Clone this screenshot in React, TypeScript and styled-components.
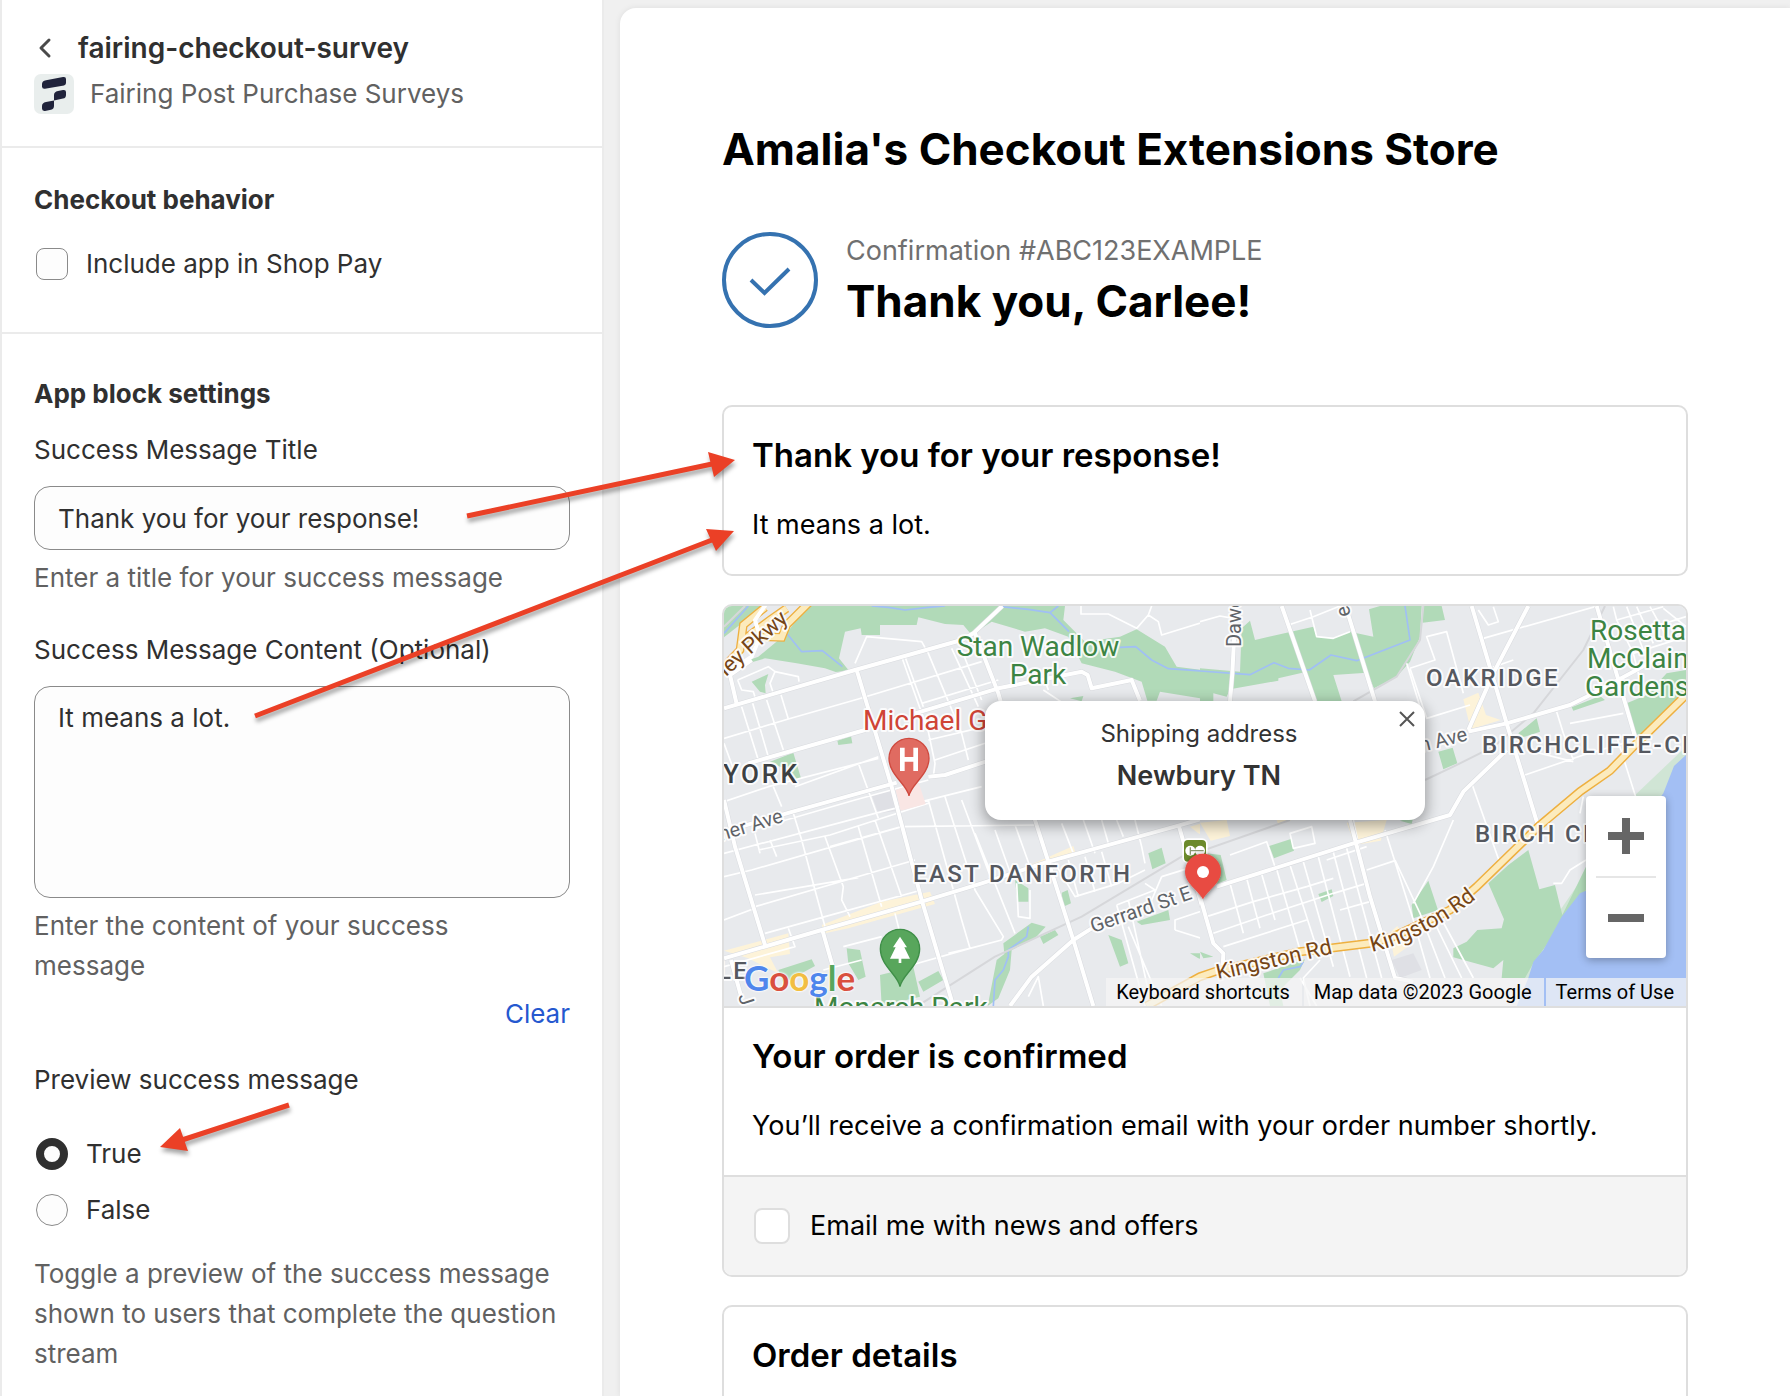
import React, { useState } from "react";
import styled, { createGlobalStyle } from "styled-components";

const GlobalStyle = createGlobalStyle`
  *, *::before, *::after { box-sizing: border-box; }
  body {
    margin: 0;
    background: #f0f0f0;
    font-family: Inter, "Liberation Sans", sans-serif;
    -webkit-font-smoothing: antialiased;
  }
  h1, h2, h3, p, fieldset, legend { margin: 0; padding: 0; border: 0; font-weight: inherit; }
  button, input, textarea { font: inherit; color: inherit; }
`;

const Layout = styled.div`
  position: relative;
  display: flex;
  gap: 16px;
  height: 100vh;
  overflow: hidden;
`;

/* ---------- settings sidebar ---------- */

const Sidebar = styled.aside`
  flex: 0 0 604px;
  background: #fff;
  border: solid #ebebeb;
  border-width: 0 2px;
  color: #303030;
  font-size: 26px;
  line-height: 40px;
`;

const Section = styled.section<{ $pad: string }>`
  padding: ${(p) => p.$pad};
  & + & { border-top: 2px solid #ebebeb; }
`;

const TitleRow = styled.div`
  display: flex;
  align-items: center;
  gap: 22px;
`;

const BackButton = styled.button`
  display: flex;
  padding: 0;
  border: 0;
  background: none;
`;

const BlockTitle = styled.h1`
  font-size: 28px;
  font-weight: 600;
`;

const AppRow = styled.div`
  display: flex;
  align-items: center;
  gap: 16px;
  margin-top: 6px;
  color: #616161;
`;

const GroupTitle = styled.h2<{ $gap: number }>`
  font-size: 26px;
  font-weight: 650;
  margin-bottom: ${(p) => p.$gap}px;
`;

const Choice = styled.label`
  display: flex;
  align-items: center;
  gap: 18px;
  padding-left: 2px;
`;

const Tick = styled.input`
  appearance: none;
  width: 32px;
  height: 32px;
  margin: 0;
  border: 1px solid #8a8a8a;
  border-radius: 8px;
  background: #fdfdfd;
  &:checked { border: 8px solid #303030; }
`;

const RadioDot = styled(Tick)`
  border-radius: 50%;
`;

const Field = styled.div<{ $after: number }>`
  display: flex;
  flex-direction: column;
  margin-bottom: ${(p) => p.$after}px;
`;

const FieldLabel = styled.label`
  margin-bottom: 16px;
`;

const TextInput = styled.input`
  height: 64px;
  padding: 0 23px;
  border: 1px solid #8a8a8a;
  border-radius: 16px;
  background: #fdfdfd;
`;

const TextArea = styled.textarea`
  height: 212px;
  padding: 11px 23px;
  border: 1px solid #8a8a8a;
  border-radius: 16px;
  background: #fdfdfd;
  resize: none;
`;

const Help = styled.p<{ $gap?: number }>`
  margin-top: ${(p) => p.$gap ?? 8}px;
  padding-right: 8px;
  color: #616161;
`;

const ClearButton = styled.button`
  align-self: flex-end;
  margin-top: 8px;
  padding: 0;
  border: 0;
  background: none;
  color: #2558cf;
`;

const RadioGroup = styled.fieldset`
  display: flex;
  flex-direction: column;
  gap: 16px;
`;

const RadioLegend = styled.legend`
  margin-bottom: 34px;
`;

/* ---------- checkout preview ---------- */

const Preview = styled.main`
  flex: 1;
  min-width: 0;
  margin-top: 8px;
  padding: 112px 102px 0;
  background: #fff;
  border-radius: 16px 0 0 0;
  box-shadow: 0 0 6px rgba(0, 0, 0, 0.08);
  color: #000;
  font-size: 27px;
  line-height: 42px;
`;

const StoreName = styled.h1`
  font-size: 44px;
  line-height: 58px;
  font-weight: 650;
`;

const Confirmation = styled.header`
  display: flex;
  align-items: center;
  gap: 28px;
  margin: 52px 0 75px;
`;

const ConfirmationNumber = styled.p`
  color: #707070;
`;

const Thanks = styled.h2`
  font-size: 44px;
  line-height: 58px;
  font-weight: 650;
`;

const Card = styled.section`
  margin-bottom: 28px;
  border: 2px solid #dedede;
  border-radius: 10px;
  overflow: hidden;
`;

const CardBody = styled.div`
  padding: 28px;
`;

const CardTitle = styled.h3`
  font-size: 33px;
  line-height: 40px;
  font-weight: 600;
  margin-bottom: 29px;
`;

const CardFooter = styled.label`
  display: flex;
  align-items: center;
  gap: 20px;
  padding: 28px 30px;
  border-top: 2px solid #dedede;
  background: #f4f4f4;
`;

const OfferTick = styled.input`
  appearance: none;
  width: 36px;
  height: 36px;
  margin: 0;
  border: 2px solid #dedede;
  border-radius: 8px;
  background: #fff;
`;

/* ---------- map ---------- */

const MapFrame = styled.div`
  position: relative;
  height: 402px;
  border-bottom: 2px solid #dedede;
  background: #e8eaed;
  overflow: hidden;
`;

const MapArt = styled.svg`
  display: block;
  width: 100%;
  height: 400px;
  font-family: Roboto, "Liberation Sans", sans-serif;
  font-size: 22px;

  text { paint-order: stroke; stroke: #fff; stroke-width: 4px; stroke-linejoin: round; stroke-opacity: 0.85; }
  .park { fill: #3c8443; font-size: 28px; }
  .care { fill: #cf4436; font-size: 28px; }
  .area { fill: #55585f; font-size: 24px; font-weight: 500; letter-spacing: 0.1em; }
  .city { fill: #3c4043; font-size: 26px; font-weight: 500; letter-spacing: 0.1em; }
  .road { fill: #5f6368; font-size: 20px; }
  .highway { fill: #754516; }
`;

const Popup = styled.div`
  position: absolute;
  top: 95px;
  left: 50%;
  width: 440px;
  margin-left: -220px;
  padding: 12px 12px 23px 0;
  border-radius: 16px;
  background: #fff;
  box-shadow: 0 4px 14px 2px rgba(0, 0, 0, 0.32);
  color: #333;
  text-align: center;
`;

const PopupLabel = styled.p`
  font-size: 24px;
`;

const PopupPlace = styled.p`
  font-size: 27px;
  font-weight: 600;
`;

const PopupClose = styled.button`
  position: absolute;
  top: 10px;
  right: 10px;
  display: flex;
  padding: 0;
  border: 0;
  background: none;
`;

const ZoomControl = styled.div`
  position: absolute;
  right: 20px;
  bottom: 48px;
  display: flex;
  flex-direction: column;
  align-items: center;
  width: 80px;
  border-radius: 4px;
  background: #fff;
  box-shadow: 0 2px 8px rgba(0, 0, 0, 0.3);
`;

const ZoomButton = styled.button`
  display: flex;
  align-items: center;
  justify-content: center;
  width: 60px;
  height: 80px;
  padding: 0;
  border: 0;
  background: none;
  & + & { height: 82px; border-top: 2px solid #e6e6e6; }
`;

const GoogleLink = styled.a`
  position: absolute;
  left: 20px;
  bottom: 5px;
  font-family: Lato, "Open Sans", sans-serif;
  font-size: 35px;
  line-height: 48px;
  font-weight: 700;
  text-decoration: none;
  text-shadow: 0 0 2px #fff, 0 0 2px #fff, 0 0 3px #fff;
`;

const Tint = styled.span<{ $c: string }>`
  color: ${(p) => p.$c};
`;

const MapCredits = styled.div`
  position: absolute;
  right: 0;
  bottom: 0;
  display: flex;
  gap: 2px;
  font-family: Roboto, "Liberation Sans", sans-serif;
  font-size: 20px;
  line-height: 28px;
`;

const CreditButton = styled.button`
  padding: 0 12px 0 10px;
  border: 0;
  background: rgba(245, 245, 245, 0.72);
  color: #000;
  line-height: 28px;
`;

const CreditText = styled.span`
  padding: 0 12px 0 10px;
  background: rgba(245, 245, 245, 0.72);
`;

const CreditLink = styled.a`
  padding: 0 12px 0 10px;
  background: rgba(245, 245, 245, 0.72);
  color: #000;
  text-decoration: none;
`;

const Annotations = styled.svg`
  position: absolute;
  top: 0;
  left: 0;
  pointer-events: none;
  filter: drop-shadow(1px 4px 2px rgba(0, 0, 0, 0.35));
`;

/* Streets are traced on two tiles, each drawn at three units per pixel. */
const WEST = "translate(-9 -6) scale(0.33333)";
const EAST = "translate(476 -6) scale(0.33333)";

const westParks = [
  "M27 18H150L70 78L27 112Z",
  "M60 195L130 170L215 100L275 18H1050L1045 60L1110 125L1215 110L1265 88L1350 140L1385 200L1500 215V302L1335 275L1325 302H1297L1280 245L1200 215L1100 190L1060 110L990 85L930 95L830 65L770 105L745 75L690 72L610 52L605 75L495 75V105H440L437 85L390 95L372 175L402 212L362 216L330 205L245 190L150 175L100 190L40 230Z",
  "M110 245L160 222L150 255L152 280L135 275Z",
  "M367 422L408 408L412 430L370 435Z",
  "M165 485L235 458L258 535L240 540L225 505L195 500Z",
  "M1300 760L1340 743L1352 790L1312 808Z",
  "M900 840L940 865V905H908Z",
  "M1040 878L1058 870L1068 910L1045 920Z",
  "M395 1045L435 1050L452 1130L430 1140L400 1090Z",
  "M495 1125L595 1100L615 1190L500 1218Z",
  "M610 1145L670 1113L685 1140L625 1175Z",
  "M865 1030L950 968L992 980L960 1015L890 1050L885 1110L850 1195L818 1218L845 1080L868 1062Z",
  "M975 1010L1020 990L1030 1005L985 1032Z",
  "M1265 965L1360 930L1365 960L1280 975Z",
  "M1180 1005L1220 1020L1240 1090L1215 1100Z",
  "M1425 1060H1500V1085L1450 1075Z",
  "M190 1110L290 1078L300 1098L205 1150Z",
  "M1065 295L1105 288L1100 304Z",
];
const westShops = [
  "M320 975L500 905L645 875L660 912L400 985L330 1000Z",
  "M27 1052L220 1000L225 1062L165 1072L190 1120L150 1100L100 1075Z",
  "M900 815L1075 738L1082 760L960 800Z",
  "M1425 680L1500 658V722L1450 700Z",
];
const westMinor = [
  "M27 415L220 357L430 297L800 185", "M240 560L490 470", "M27 605L160 560L490 475",
  "M110 690L420 600L640 540", "M27 760L480 640L800 560", "M130 750L345 705L640 610", "M27 830L110 810L560 680L960 675",
  "M120 885L430 833", "M120 920L600 780", "M150 1000L330 950L620 870", "M345 740L560 680", "M560 170L640 395L660 490L655 530",
  "M640 160L740 400L760 480", "M710 145L790 320", "M570 170L625 320", "M740 150L800 300",
  "M80 320L130 480", "M113 310L160 470", "M155 300L205 450", "M198 285L220 357", "M27 430L60 520",
  "M430 490L490 655", "M175 560L200 620", "M235 640L260 720L300 870L330 980", "M330 710L385 860L380 900L405 950",
  "M430 680L500 920", "M480 660L560 890", "M640 600L740 960L765 1045", "M690 590L780 870L865 1010L860 1020L765 1045L590 1095",
  "M740 600L830 840", "M780 700L900 1000", "M840 690L890 830", "M900 675L945 800", "M1040 670L1075 760", "M1105 660L1140 760",
  "M1160 660L1180 730", "M1205 660L1225 710", "M1260 660L1280 740L1290 790", "M1020 790L1080 890L1210 850L1290 810",
  "M1060 780L1090 890", "M1110 770L1140 875", "M1160 755L1190 860", "M1340 830L1310 900", "M1340 830L1420 805",
  "M660 480L810 430", "M640 420L810 380", "M620 310L850 240", "M1098 18V42H1180L1265 85L1300 45L1310 18", "M1300 45L1330 65L1340 105L1500 55",
  "M420 190L455 110L620 125L640 160", "M68 240L160 200L180 215L250 230L252 245M180 215L165 250L175 280", "M68 240L80 270L115 275L120 290",
  "M540 940L555 1000L560 1050", "M385 1040L500 1010", "M220 985L240 1040L27 1100", "M325 1110L440 1080", "M700 1060L765 1045",
  "M905 850L910 950L945 955V870", "M1205 915L1290 1218", "M1240 900L1310 1218", "M1205 915L1320 870L1290 850", "M1380 990L1490 1025",
  "M1380 990V960L1500 920", "M940 1190L970 1130L985 1218", "M1240 980L1340 1218", "M985 270L1060 320", "M985 230L1000 270",
  "M120 700L135 760", "M165 720L185 770", "M27 960L120 925",
];
const westMajor = [
  "M27 325L420 210L740 120L775 100L862 18", "M100 490L450 390", "M27 695L215 640L545 548", "M27 1075L320 990L620 905L800 850L1000 785L1390 677L1500 645",
  "M425 210L530 560L620 900L715 1218", "M780 100L850 280L960 660L1000 785L1075 1020L1135 1218",
  "M600 340L850 265L1100 215L1118 225L1130 265L1250 240L1275 302", "M640 530L690 525L812 485", "M27 600L60 740L150 1035",
  "M65 312L45 225L110 180", "M885 1218L950 1130L1075 1020L1130 985", "M1390 672L1470 950L1500 1040", "M322 990L352 1095", "M48 1080L80 1195",
];
const westWater = [
  "M27 100L100 18", "M195 60L215 100L260 155L322 152L382 200", "M470 18L520 22L570 30L640 22L690 18", "M860 20L940 28L1005 38L1030 18",
  "M1005 38L1062 95", "M1215 142L1262 140L1310 180L1360 206L1500 216", "M940 980L935 1010L880 1050V1070L865 1110L840 1140L835 1218",
];
const parkway = "M27 200L75 150L85 75L150 22M110 130L135 110L200 112L215 75L290 0M85 120L165 60L215 25";

const eastParks = [
  "M0 205L60 210L120 215L125 85L150 62L165 120L340 80L350 110L400 115L450 95L520 110L507 28L540 18H665L660 110L630 185L590 230L522 265L500 218L400 225L425 304H340L320 215L235 235V242L90 268L80 290L40 280V304H0Z",
  "M670 18H725L735 60L668 68Z",
  "M1280 310L1340 285L1400 220L1458 210V280L1330 425L1300 390Z",
  "M1115 322L1200 288L1215 300L1120 332Z",
  "M955 400L1010 355L1020 395L968 412Z",
  "M715 455L758 443L772 490L730 508Z",
  "M208 738L275 716L282 752L222 775Z",
  "M355 882L395 868L400 888L365 906Z",
  "M635 915L685 842L714 930L640 955Z",
  "M600 662L640 652L635 672Z",
  "M925 795L985 750L1018 868L1065 855L1087 945L1158 800V870L1000 1090L975 1134H905L910 1080L880 1105L760 1072V1045L800 1025L832 990L905 985L912 958L865 850Z",
  "M190 1120L315 1078L300 1110L240 1170L250 1218H210Z",
  "M20 760L62 765L80 840L50 852Z",
  "M0 1055L40 1070L10 1075Z",
];
const eastShops = [
  "M790 298L835 278L858 345L902 360L812 388Z",
  "M568 1000L592 978L630 1035L582 1070Z",
  "M440 668L560 660L542 722L465 735Z",
  "M0 668L80 660L90 708L32 722Z",
  "M230 660L275 660L235 675Z",
];
const eastMinor = [
  "M90 850L130 1000", "M140 835L180 985", "M185 822L225 960", "M230 808L300 1050", "M270 795L355 1060", "M310 785L400 1100", "M355 770L450 1130",
  "M400 757L500 1134", "M440 745L545 1134", "M20 950L160 905L320 860L400 835", "M40 1000L200 945L400 880L500 850", "M70 1040L320 960",
  "M420 930L510 905", "M500 810L585 782", "M555 690L640 960L690 1134", "M585 780L660 940L735 1134", "M90 765L200 725L225 800", "M270 700L335 680L345 730L280 745Z",
  "M640 910L700 800L760 660", "M817 555L900 790", "M690 940L785 1134", "M710 930L820 1134", "M630 205L705 180L680 110L740 95L790 280",
  "M630 205L680 355L810 315", "M850 115L1185 20", "M870 205L940 180", "M835 30L865 75L895 65L880 20", "M975 525L1150 465L1270 430", "M980 450L1120 485",
  "M1110 370L1270 340", "M1070 335L1090 400L1120 480", "M1250 410L1310 600", "M1150 590L1140 640", "M1060 850L1085 850L1110 810L1158 780",
  "M265 75L340 50L420 18", "M330 30L350 110L400 115L450 95", "M0 65L60 48L100 55", "M1240 20L1250 60L1300 160L1458 110", "M1280 20L1330 150", "M1310 20L1360 130",
  "M1350 20L1400 110", "M1250 60L1390 20", "M1270 110L1458 50", "M1390 25L1458 80", "M1300 160L1320 240", "M360 1080L310 1134L330 1218", "M350 1218L300 1134",
  "M620 190L660 320", "M460 660L500 850", "M380 780L500 740",
];
const eastMajor = [
  "M103 100L97 220L90 304", "M245 18L345 304", "M445 45L525 304", "M450 660L510 890L585 1134L640 1145", "M815 18L920 370L1015 680",
  "M985 18L880 220L805 390", "M1190 18L1305 410", "M805 395L920 370L1110 315L1160 290L1300 215L1380 170", "M50 860L460 730L750 645L790 575L920 450",
  "M0 890L40 1030L70 1060L68 1100",
];
const eastWater = ["M0 213L150 224L222 188L265 205L328 210L393 165L470 182L630 120L615 18", "M310 1085L300 1100L250 1110L235 1134"];
const eastRail = ["M1215 18L1150 150L1000 340L880 440L760 500L675 540", "M0 755L270 660", "M670 18L660 120L590 230L460 304"];
const kingston = "M-160 1218L0 1130L50 1113L300 1055L395 1044L510 1030L580 1010L750 930L830 860L1015 680L1140 575L1230 512L1300 440L1458 285";

function Strokes({ d, color, width }: { d: string[]; color: string; width: number }) {
  return <path d={d.join("")} fill="none" stroke={color} strokeWidth={width} strokeLinejoin="round" />;
}

function Tile({ at, parks, shops, minor, major, water, rail }: Record<"parks" | "shops" | "minor" | "major" | "water" | "rail", string[]> & { at: string }) {
  return (
    <g transform={at}>
      <path d={parks.join("")} fill="#b1dab8" />
      <path d={shops.join("")} fill="#fdf3d9" />
      <Strokes d={water} color="#a0bff5" width={5} />
      <Strokes d={rail} color="#d6d7da" width={6} />
      <Strokes d={minor} color="#ffffff" width={5} />
      <Strokes d={major} color="#d9dbdf" width={15} />
      <Strokes d={major} color="#ffffff" width={12} />
    </g>
  );
}

function StreetMap() {
  return (
    <MapArt viewBox="0 0 962 400" preserveAspectRatio="xMidYMid slice" role="img" aria-label="Map of the shipping address">
      <defs>
        <clipPath id="west"><rect x="0" y="0" width="476" height="400" /></clipPath>
        <clipPath id="east"><rect x="476" y="0" width="486" height="400" /></clipPath>
        <path id="kingston-curve" d="M648 346Q 702 334 758 288" />
        <filter id="pin-shadow" x="-50%" y="-50%" width="200%" height="200%">
          <feDropShadow dx="1" dy="3" stdDeviation="8" floodOpacity="0.6" />
        </filter>
      </defs>
      <rect width="962" height="400" fill="#e8eaed" />
      <g clipPath="url(#west)">
        <g transform={WEST}>
          <path d="M470 585L530 570L550 632L490 640Z" fill="#dfe0e5" />
        </g>
        <Tile at={WEST} parks={westParks} shops={westShops} minor={westMinor} major={westMajor} water={westWater}
          rail={["M620 1210L840 1070L1100 950L1400 770L1500 730", "M27 80L90 18"]} />
        <path transform={WEST} d="M542 570L610 545L632 612L557 632Z" fill="#f9e6e4" />
        <g transform={WEST} fill="none">
          <path d={parkway} stroke="#eeb040" strokeWidth="26" />
          <path d={parkway} stroke="#fcebbd" strokeWidth="18" />
          <path d="M65 200L110 170L135 110L120 60L155 10" stroke="#fff" strokeWidth="12" />
        </g>
      </g>
      <g clipPath="url(#east)">
        <g transform={EAST}>
          <path d="M1458 440L1300 590L1150 830L1060 960L960 1134H1100L1458 600Z" fill="#d0e5d5" />
          <path d="M575 1080L640 1060L665 1110L600 1134Z" fill="#dfe0e5" />
        </g>
        <Tile at={EAST} parks={eastParks} shops={eastShops} minor={eastMinor} major={eastMajor} water={eastWater} rail={eastRail} />
        <path transform={EAST} d="M1458 465L1422 498L1390 580L1300 700L1158 872L1140 880L1085 950L1030 1050L1000 1085L985 1134L950 1218H1458Z" fill="#a3bff4" />
      </g>
      <g transform={EAST} fill="none">
        <path d={kingston} stroke="#eeb040" strokeWidth="27" />
        <path d={kingston} stroke="#fcebbd" strokeWidth="18" />
      </g>

      <text className="highway" transform="translate(2 71) rotate(-42)">ley Pkwy</text>
      <text className="park" x="314" y="50" textAnchor="middle">Stan Wadlow</text>
      <text className="park" x="314" y="78" textAnchor="middle">Park</text>
      <text className="care" x="139" y="124">Michael Garron Hospital</text>
      <text className="city" x="-1" y="177">YORK</text>
      <text className="road" transform="translate(-3 235) rotate(-17)">ner Ave</text>
      <text className="area" x="189" y="276">EAST DANFORTH</text>
      <text className="road" transform="translate(369 327) rotate(-19)">Gerrard St E</text>
      <text className="road" transform="translate(517 41) rotate(-90)">Dawes</text>
      <text className="road" transform="translate(627 9) rotate(-105)">e</text>
      <text className="road" transform="translate(14 390) rotate(72)">J</text>
      <text className="area" x="702" y="80">OAKRIDGE</text>
      <text className="park" x="866" y="34">Rosetta</text>
      <text className="park" x="863" y="62">McClain</text>
      <text className="park" x="861" y="90">Gardens</text>
      <text className="road" transform="translate(697 146) rotate(-14)">n Ave</text>
      <text className="area" x="758" y="147">BIRCHCLIFFE-CLIFFSIDE</text>
      <text className="area" x="751" y="236">BIRCH CLIFF</text>
      <text className="highway" transform="translate(494 374) rotate(-13)">Kingston Rd</text>
      <text className="highway"><textPath href="#kingston-curve">Kingston Rd</textPath></text>
      <text className="area" x="-6" y="373">LE</text>
      <text className="park" x="90" y="411">Monarch Park</text>

      <g transform={WEST}>
        <path d="M582 588C578 555 522 525 522 475A60 60 0 0 1 642 475C642 525 586 555 582 588Z" fill="#e06b61" stroke="#cf4a3f" strokeWidth="4" />
        <path d="M562 443V513M602 443V513M562 478H602" stroke="#fff" strokeWidth="14" />
        <path d="M555 1160C551 1127 496 1097 496 1047A59 59 0 0 1 614 1047C614 1097 559 1127 555 1160Z" fill="#58a65c" stroke="#3f8f48" strokeWidth="4" />
        <path d="M555 1010L576 1042H568L585 1076H559V1089H551V1076H525L542 1042H534Z" fill="#fff" />
        <rect x="1402" y="715" width="76" height="74" rx="16" fill="#fff" />
        <rect x="1407" y="720" width="66" height="65" rx="12" fill="#6b8a2a" />
        <circle cx="1426" cy="752" r="15" fill="#fff" />
        <circle cx="1455" cy="752" r="15" fill="#fff" />
        <path d="M1426 742V764M1426 752H1466" stroke="#8c9a72" strokeWidth="4" />
        <path filter="url(#pin-shadow)" d="M1464 898C1448 868 1410 850 1410 815A54 54 0 0 1 1518 815C1518 850 1480 868 1464 898Z" fill="#e84b43" />
        <circle cx="1464" cy="816" r="18" fill="#fff" />
      </g>
    </MapArt>
  );
}

const googleLetters: [string, string][] = [
  ["G", "#4f86ec"], ["o", "#d9503f"], ["o", "#f2be42"], ["g", "#4f86ec"], ["l", "#58a65c"], ["e", "#d9503f"],
];

function ShippingMap() {
  const [open, setOpen] = useState(true);
  return (
    <MapFrame>
      <StreetMap />
      {open && (
        <Popup>
          <PopupLabel>Shipping address</PopupLabel>
          <PopupPlace>Newbury TN</PopupPlace>
          <PopupClose aria-label="Close" onClick={() => setOpen(false)}>
            <svg width="16" height="16" viewBox="0 0 16 16" stroke="#555" strokeWidth="2">
              <path d="M1 1L15 15M15 1L1 15" />
            </svg>
          </PopupClose>
        </Popup>
      )}
      <ZoomControl>
        <ZoomButton aria-label="Zoom in">
          <svg width="36" height="36" viewBox="0 0 36 36" stroke="#666" strokeWidth="8"><path d="M0 18H36M18 0V36" /></svg>
        </ZoomButton>
        <ZoomButton aria-label="Zoom out">
          <svg width="36" height="36" viewBox="0 0 36 36" stroke="#666" strokeWidth="8"><path d="M0 18H36" /></svg>
        </ZoomButton>
      </ZoomControl>
      <GoogleLink href="#google">
        {googleLetters.map(([letter, color], i) => <Tint key={i} $c={color}>{letter}</Tint>)}
      </GoogleLink>
      <MapCredits>
        <CreditButton>Keyboard shortcuts</CreditButton>
        <CreditText>Map data ©2023 Google</CreditText>
        <CreditLink href="#terms">Terms of Use</CreditLink>
      </MapCredits>
    </MapFrame>
  );
}

function Arrows() {
  return (
    <Annotations width="760" height="1180" fill="#eb4026" stroke="#eb4026" aria-hidden="true">
      <path d="M467 516L712 464M255 716L712 540M289 1105L182 1140" strokeWidth="5" />
      <path stroke="none" d="M735 460L708 452L714 477ZM734 531L706 529L716 551ZM160 1147L180 1128L188 1151Z" />
    </Annotations>
  );
}

export default function App() {
  const [title, setTitle] = useState("Thank you for your response!");
  const [content, setContent] = useState("It means a lot.");
  const [preview, setPreview] = useState(true);

  return (
    <Layout>
      <GlobalStyle />
      <Sidebar>
        <Section $pad="28px 32px 32px">
          <TitleRow>
            <BackButton aria-label="Back">
              <svg width="22" height="22" viewBox="0 0 22 22" fill="none" stroke="#4a4a4a" strokeWidth="3" strokeLinecap="round" strokeLinejoin="round">
                <path d="M15 3L7 11L15 19" />
              </svg>
            </BackButton>
            <BlockTitle>fairing-checkout-survey</BlockTitle>
          </TitleRow>
          <AppRow>
            <svg width="40" height="40" viewBox="0 0 40 40" aria-hidden="true">
              <rect width="40" height="40" rx="7" fill="#e9eeed" />
              <g fill="#20233b">
                <path d="M12 6.200L29 3Q32 2.500 32 5V9Q32 11 30 11.400L11 14.800Q8 15.200 8 12.500V10Q8 7 12 6.200Z" />
                <path d="M24 17L29 16Q32 15.500 32 18V21Q32 24 29 24.600L20 26.400V21Q20 17.800 24 17Z" />
                <path d="M12 28L20 26.400V32Q20 35 17 35.700L11 36.900Q8 37.300 8 34.500V32Q8 28.800 12 28Z" />
              </g>
            </svg>
            <p>Fairing Post Purchase Surveys</p>
          </AppRow>
        </Section>

        <Section $pad="32px 32px 48px">
          <GroupTitle $gap={24}>Checkout behavior</GroupTitle>
          <Choice>
            <Tick type="checkbox" />
            Include app in Shop Pay
          </Choice>
        </Section>

        <Section $pad="40px 32px 0">
          <GroupTitle $gap={16}>App block settings</GroupTitle>
          <Field $after={32}>
            <FieldLabel htmlFor="success-title">Success Message Title</FieldLabel>
            <TextInput id="success-title" value={title} onChange={(e) => setTitle(e.target.value)} />
            <Help>Enter a title for your success message</Help>
          </Field>
          <Field $after={26}>
            <FieldLabel htmlFor="success-content">Success Message Content (Optional)</FieldLabel>
            <TextArea id="success-content" value={content} onChange={(e) => setContent(e.target.value)} />
            <Help>Enter the content of your success message</Help>
            <ClearButton onClick={() => setContent("")}>Clear</ClearButton>
          </Field>
          <RadioGroup>
            <RadioLegend>Preview success message</RadioLegend>
            <Choice>
              <RadioDot type="radio" name="preview" checked={preview} onChange={() => setPreview(true)} />
              True
            </Choice>
            <Choice>
              <RadioDot type="radio" name="preview" checked={!preview} onChange={() => setPreview(false)} />
              False
            </Choice>
          </RadioGroup>
          <Help $gap={24}>Toggle a preview of the success message shown to users that complete the question stream</Help>
        </Section>
      </Sidebar>

      <Preview>
        <StoreName>Amalia's Checkout Extensions Store</StoreName>
        <Confirmation>
          <svg width="96" height="96" viewBox="0 0 96 96" fill="none" stroke="#3572b0" aria-hidden="true">
            <circle cx="48" cy="48" r="46" strokeWidth="4" />
            <path d="M29 48L42.500 61L67 37" strokeWidth="4" />
          </svg>
          <div>
            <ConfirmationNumber>Confirmation #ABC123EXAMPLE</ConfirmationNumber>
            <Thanks>Thank you, Carlee!</Thanks>
          </div>
        </Confirmation>

        {preview && (
          <Card>
            <CardBody>
              <CardTitle>{title}</CardTitle>
              <p>{content}</p>
            </CardBody>
          </Card>
        )}

        <Card>
          <ShippingMap />
          <CardBody>
            <CardTitle>Your order is confirmed</CardTitle>
            <p>You’ll receive a confirmation email with your order number shortly.</p>
          </CardBody>
          <CardFooter>
            <OfferTick type="checkbox" />
            Email me with news and offers
          </CardFooter>
        </Card>

        <Card>
          <CardBody>
            <CardTitle>Order details</CardTitle>
          </CardBody>
        </Card>
      </Preview>
      <Arrows />
    </Layout>
  );
}
